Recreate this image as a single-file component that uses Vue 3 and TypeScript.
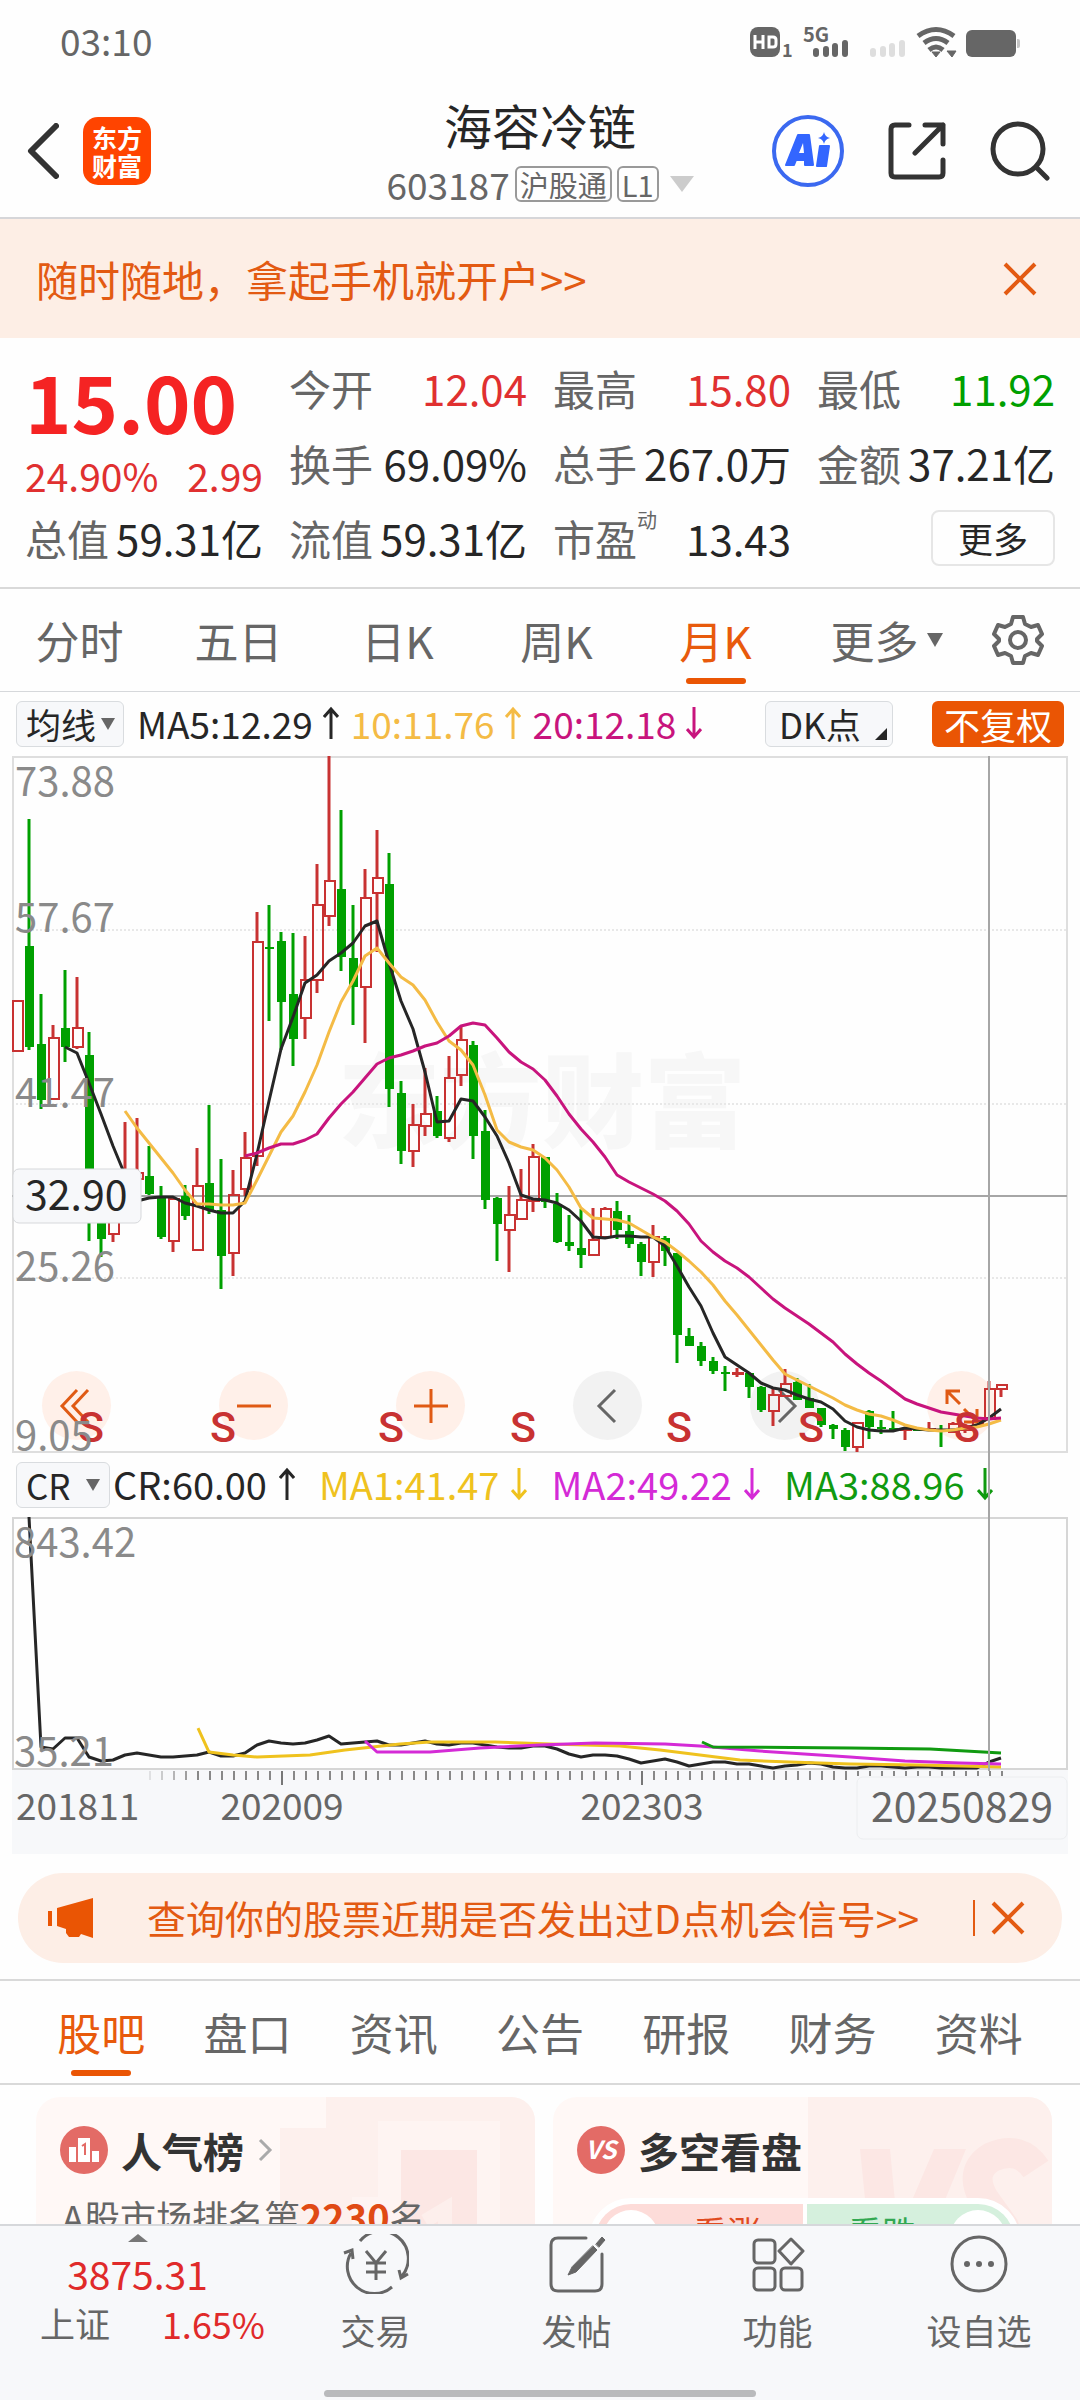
<script setup lang="ts">
import { ref } from 'vue'

type Tone = 'up' | 'down' | 'plain'
interface Quote { label: string; value: string; tone: Tone; sup?: string }
// slot index, rising or falling, then high / body top / body bottom / low
type Candle = [number, 'r' | 'g', number, number, number, number]

const rowOne: Quote[] = [
  { label: '今开', value: '12.04', tone: 'up' },
  { label: '最高', value: '15.80', tone: 'up' },
  { label: '最低', value: '11.92', tone: 'down' },
]
const rowTwo: Quote[] = [
  { label: '换手', value: '69.09%', tone: 'plain' },
  { label: '总手', value: '267.0万', tone: 'plain' },
  { label: '金额', value: '37.21亿', tone: 'plain' },
]
const rowThree: Quote[] = [
  { label: '总值', value: '59.31亿', tone: 'plain' },
  { label: '流值', value: '59.31亿', tone: 'plain' },
  { label: '市盈', value: '13.43', tone: 'plain', sup: '动' },
]

const periods = ['分时', '五日', '日K', '周K', '月K']
const period = ref('月K')
const sections = ['股吧', '盘口', '资讯', '公告', '研报', '财务', '资料']
const section = ref('股吧')
const overlay = ref('均线')
const indicator = ref('CR')
const showOpenAccount = ref(true)
const showSignal = ref(true)

const maLegend = [
  { text: 'MA5:12.29', cls: 'ink', up: true },
  { text: '10:11.76', cls: 'amber', up: true },
  { text: '20:12.18', cls: 'magenta', up: false },
]
const crLegend = [
  { text: 'CR:60.00', cls: 'ink', up: true },
  { text: 'MA1:41.47', cls: 'yellow', up: false },
  { text: 'MA2:49.22', cls: 'violet', up: false },
  { text: 'MA3:88.96', cls: 'green', up: false },
]

const candles: Candle[] = [
  [0, 'r', 1001, 1001, 1051, 1051], [1, 'g', 819, 946, 1047, 1050], [2, 'g', 994, 1044, 1100, 1109],
  [3, 'r', 1025, 1038, 1099, 1099], [4, 'g', 970, 1028, 1047, 1062], [5, 'r', 977, 1028, 1047, 1049],
  [6, 'g', 1032, 1055, 1190, 1241], [7, 'g', 1180, 1190, 1239, 1257], [8, 'r', 1180, 1200, 1234, 1242],
  [9, 'r', 1122, 1180, 1210, 1210], [10, 'r', 1118, 1173, 1179, 1179], [11, 'g', 1146, 1176, 1194, 1195],
  [12, 'g', 1186, 1196, 1237, 1239], [13, 'r', 1199, 1199, 1241, 1252], [14, 'g', 1185, 1196, 1216, 1220],
  [15, 'r', 1148, 1186, 1250, 1250], [16, 'g', 1105, 1183, 1210, 1214], [17, 'g', 1159, 1210, 1256, 1289],
  [18, 'r', 1170, 1195, 1253, 1276], [19, 'r', 1132, 1158, 1189, 1196], [20, 'r', 912, 942, 1156, 1166],
  [21, 'g', 905, 947, 949, 1021], [22, 'g', 932, 941, 1002, 1050], [23, 'g', 933, 994, 1039, 1066],
  [24, 'r', 936, 980, 1018, 1039], [25, 'r', 864, 905, 980, 993], [26, 'r', 756, 881, 916, 926],
  [27, 'g', 810, 889, 957, 971], [28, 'g', 905, 958, 987, 1025], [29, 'r', 869, 898, 987, 1043],
  [30, 'r', 830, 878, 893, 952], [31, 'g', 853, 884, 1089, 1107], [32, 'g', 1081, 1093, 1151, 1164],
  [33, 'r', 1104, 1125, 1151, 1167], [34, 'r', 1068, 1114, 1126, 1136], [35, 'g', 1096, 1111, 1136, 1138],
  [36, 'r', 1056, 1078, 1138, 1142], [37, 'r', 1026, 1040, 1075, 1086], [38, 'g', 1041, 1045, 1136, 1159],
  [39, 'g', 1110, 1131, 1200, 1209], [40, 'g', 1197, 1198, 1224, 1261], [41, 'r', 1186, 1215, 1230, 1272],
  [42, 'r', 1169, 1200, 1219, 1219], [43, 'r', 1144, 1157, 1201, 1212], [44, 'g', 1157, 1157, 1202, 1208],
  [45, 'g', 1193, 1204, 1242, 1243], [46, 'g', 1215, 1242, 1246, 1251], [47, 'g', 1209, 1248, 1255, 1268],
  [48, 'r', 1208, 1240, 1255, 1255], [49, 'r', 1207, 1209, 1237, 1237], [50, 'g', 1201, 1211, 1230, 1239],
  [51, 'g', 1215, 1231, 1244, 1248], [52, 'g', 1242, 1244, 1262, 1276], [53, 'r', 1225, 1237, 1262, 1277],
  [54, 'g', 1236, 1238, 1251, 1266], [55, 'g', 1253, 1253, 1335, 1363], [56, 'g', 1328, 1336, 1346, 1346],
  [57, 'g', 1342, 1346, 1361, 1366], [58, 'g', 1357, 1361, 1371, 1374], [59, 'g', 1366, 1372, 1374, 1391],
  [60, 'r', 1368, 1373, 1374, 1377], [61, 'g', 1373, 1373, 1387, 1398], [62, 'g', 1386, 1387, 1410, 1412],
  [63, 'r', 1388, 1395, 1411, 1426], [64, 'r', 1369, 1384, 1396, 1396], [65, 'g', 1378, 1382, 1400, 1400],
  [66, 'g', 1384, 1398, 1408, 1408], [67, 'g', 1408, 1408, 1425, 1427], [68, 'g', 1424, 1425, 1429, 1439],
  [69, 'g', 1428, 1430, 1447, 1451], [70, 'r', 1423, 1423, 1447, 1452], [71, 'g', 1410, 1411, 1427, 1439],
  [72, 'g', 1420, 1427, 1429, 1434], [73, 'g', 1411, 1428, 1430, 1430], [74, 'r', 1428, 1429, 1430, 1440],
  [75, 'g', 1428, 1429, 1431, 1431], [76, 'r', 1422, 1429, 1430, 1430], [77, 'g', 1425, 1429, 1430, 1447],
  [78, 'r', 1422, 1424, 1432, 1432], [79, 'r', 1424, 1426, 1430, 1433], [80, 'r', 1420, 1421, 1425, 1425],
  [81, 'r', 1381, 1389, 1418, 1418], [82, 'r', 1385, 1385, 1389, 1397],
]

const slot = (i: number): number => 17 + i * 12
const line = (start: number, ys: number[]): string =>
  ys.map((y, k) => `${slot(start + k)},${y}`).join(' ')

const ma5 = line(4, [1047, 1053, 1083, 1114, 1146, 1175, 1201, 1198, 1197, 1197, 1203, 1206, 1210, 1213, 1213,
  1201, 1154, 1101, 1049, 1017, 983, 975, 961, 953, 943, 926, 921, 963, 1001, 1029, 1072, 1122, 1121, 1099,
  1101, 1117, 1136, 1163, 1195, 1199, 1200, 1203, 1210, 1221, 1237, 1238, 1236, 1236, 1237, 1237, 1246, 1266,
  1287, 1306, 1333, 1357, 1365, 1373, 1383, 1388, 1390, 1395, 1399, 1402, 1409, 1421, 1427, 1430, 1431, 1431,
  1428, 1429, 1430, 1430, 1430, 1428, 1425, 1418, 1409])
const ma10 = line(9, [1111, 1128, 1143, 1158, 1173, 1190, 1204, 1204, 1205, 1205, 1203, 1180, 1156, 1132, 1116,
  1092, 1065, 1032, 1002, 981, 956, 948, 963, 977, 985, 1000, 1022, 1041, 1050, 1065, 1095, 1130, 1142, 1147,
  1150, 1158, 1170, 1187, 1208, 1218, 1219, 1220, 1223, 1230, 1237, 1242, 1251, 1261, 1272, 1285, 1301, 1315,
  1330, 1345, 1360, 1374, 1380, 1386, 1392, 1398, 1405, 1410, 1414, 1416, 1420, 1425, 1428, 1430, 1431, 1430,
  1428, 1427, 1424, 1420])
const ma20 = line(19, [1156, 1153, 1148, 1144, 1144, 1140, 1134, 1118, 1104, 1092, 1078, 1064, 1058, 1055, 1051,
  1046, 1043, 1036, 1026, 1023, 1025, 1038, 1052, 1062, 1069, 1080, 1096, 1114, 1129, 1142, 1157, 1175, 1182,
  1188, 1194, 1201, 1211, 1224, 1241, 1252, 1261, 1268, 1277, 1288, 1299, 1308, 1316, 1324, 1333, 1342, 1354,
  1364, 1373, 1381, 1390, 1399, 1404, 1408, 1412, 1414, 1416, 1418, 1419, 1418])
const cr = line(1, [1517, 1747, 1749, 1738, 1738, 1757, 1761, 1760, 1755, 1753, 1755, 1757, 1757, 1756, 1755,
  1752, 1756, 1756, 1753, 1745, 1741, 1743, 1744, 1743, 1740, 1736, 1744, 1743, 1742, 1741, 1745, 1745, 1743,
  1741, 1744, 1745, 1743, 1743, 1745, 1747, 1748, 1748, 1746, 1746, 1749, 1754, 1757, 1755, 1755, 1756, 1759,
  1763, 1761, 1759, 1762, 1766, 1764, 1762, 1762, 1764, 1764, 1766, 1768, 1766, 1765, 1763, 1764, 1767, 1768,
  1768, 1766, 1766, 1767, 1768, 1767, 1767, 1768, 1768, 1768, 1768, 1762, 1758])

const priceLabels = [
  { y: 796, text: '73.88' }, { y: 932, text: '57.67' }, { y: 1107, text: '41.47' },
  { y: 1281, text: '25.26' }, { y: 1450, text: '9.05' },
]
const sellMarks = [91, 223, 391, 523, 679, 811, 967]
const ticks = Array.from({ length: 72 }, (_, k) => k + 11)
</script>

<template>
  <div class="app">
    <div class="status">
      <span class="clock">03:10</span>
      <svg class="status-icons" viewBox="750 22 272 40" aria-hidden="true">
        <rect x="750" y="27" width="30" height="30" rx="8" fill="#666" />
        <path d="M755 35v14M763 35v14M755 42h8M769 37v10h4q3 0 3-3v-4q0-3-3-3z" fill="none" stroke="#fff" stroke-width="3" />
        <text x="782" y="57" font-size="18" font-weight="700" fill="#666">1</text>
        <text x="803" y="42" font-size="20" font-weight="700" fill="#666">5G</text>
        <g stroke="#666" stroke-width="6" stroke-linecap="round">
          <path d="M816 51v3M826 49v5M835 46v8M845 43v11" />
        </g>
        <g stroke="#dedede" stroke-width="6" stroke-linecap="round">
          <path d="M873 51v3M883 49v5M892 46v8M902 43v11" />
        </g>
        <g fill="none" stroke="#666" stroke-width="5">
          <path d="M918 36q18-13 36 0M924 43q12-9 24 0M929 50q7-6 14 0" />
        </g>
        <path d="M932 52h8l-4 5zM947 51h9l-4 6z" fill="#666" stroke="#666" />
        <rect x="966" y="30" width="50" height="27" rx="6" fill="#666" />
        <path d="M1017 39h1q2 0 2 2v5q0 2-2 2h-1z" fill="#c4c4c4" />
      </svg>
    </div>

    <header class="header">
      <div class="head-left">
        <button class="icon-btn" aria-label="返回">
          <svg width="32" height="56" viewBox="0 0 32 56"><path d="M29 3 4 28l25 25" fill="none" stroke="#333" stroke-width="6" stroke-linecap="round" stroke-linejoin="round" /></svg>
        </button>
        <a class="logo" href="#home"><span>东方</span><span>财富</span></a>
      </div>
      <div class="head-mid">
        <h1>海容冷链</h1>
        <div class="code">
          <span>603187</span><span class="tag">沪股通</span><span class="tag">L1</span>
          <svg width="24" height="16" viewBox="0 0 24 16"><path d="M0 0h24L12 16z" fill="#ccc" /></svg>
        </div>
      </div>
      <div class="head-right">
        <button class="icon-btn" aria-label="Ai">
          <svg width="72" height="72" viewBox="0 0 72 72">
            <circle cx="36" cy="36" r="34" fill="#fff" stroke="#3b69f0" stroke-width="4" />
            <path d="M14 50h8l2-5h9v5h8L37 20H26z" fill="#3366ff" stroke="#3366ff" stroke-width="2" stroke-linejoin="round" />
            <path d="m27 38 4-10 1 10z" fill="#fff" />
            <path d="M48 31h9l-3 20h-9z" fill="#3366ff" stroke="#3366ff" stroke-width="2" stroke-linejoin="round" />
            <path d="M52 17q1 5 6 6-5 1-6 6-1-5-6-6 5-1 6-6z" fill="#3366ff" />
          </svg>
        </button>
        <button class="icon-btn" aria-label="分享">
          <svg width="58" height="58" viewBox="0 0 58 58" fill="none" stroke="#333" stroke-width="5" stroke-linecap="round" stroke-linejoin="round">
            <path d="M21 3H7Q3 3 3 7v44q0 4 4 4h44q4 0 4-4V38M37 3h18v19M55 3 27 31" />
          </svg>
        </button>
        <button class="icon-btn" aria-label="搜索">
          <svg width="60" height="60" viewBox="0 0 60 60" fill="none" stroke="#333" stroke-width="5" stroke-linecap="round">
            <circle cx="28" cy="28" r="25" /><path d="m46 46 11 11" />
          </svg>
        </button>
      </div>
    </header>

    <div v-if="showOpenAccount" class="banner">
      <a href="#open">随时随地，拿起手机就开户&gt;&gt;</a>
      <button class="icon-btn" aria-label="关闭" @click="showOpenAccount = false">
        <svg width="34" height="34" viewBox="0 0 34 34"><path d="m2 2 30 30M32 2 2 32" stroke="#e35a12" stroke-width="4" /></svg>
      </button>
    </div>

    <section class="quote">
      <div class="price-block">
        <strong class="price">15.00</strong>
        <div class="change"><span>24.90%</span><span>2.99</span></div>
      </div>
      <div v-for="q in [...rowOne, ...rowTwo, ...rowThree]" :key="q.label" class="cell">
        <span class="label">{{ q.label }}<sup v-if="q.sup">{{ q.sup }}</sup></span>
        <span class="value" :class="q.tone">{{ q.value }}</span>
      </div>
      <div class="cell end"><button class="more">更多</button></div>
    </section>

    <nav class="periods">
      <button v-for="p in periods" :key="p" class="tab" :class="{ on: p === period }" @click="period = p">{{ p }}</button>
      <button class="tab tab-more">更多<svg width="16" height="14" viewBox="0 0 16 14"><path d="M0 0h16L8 14z" fill="#666" /></svg></button>
      <button class="icon-btn gear" aria-label="设置">
        <svg width="52" height="52" viewBox="0 0 52 52" fill="none" stroke="#666" stroke-width="4" stroke-linejoin="round">
          <path d="M21 3h10l2 7 6 3 7-2 4 9-5 5v2l5 5-4 9-7-2-6 3-2 7H21l-2-7-6-3-7 2-4-9 5-5v-2l-5-5 4-9 7 2 6-3z" /><circle cx="26" cy="26" r="8" />
        </svg>
      </button>
    </nav>

    <section class="charts">
      <div class="legend top">
        <label class="pick"><select v-model="overlay" aria-label="主图指标"><option>均线</option></select>
          <svg width="14" height="12" viewBox="0 0 14 12"><path d="M0 0h14L7 12z" fill="#666" /></svg></label>
        <span v-for="m in maLegend" :key="m.text" class="leg" :class="m.cls">{{ m.text }}<svg width="16" height="34" viewBox="0 0 16 34" fill="none" stroke="currentColor" stroke-width="3"><path :d="m.up ? 'M8 33V3M1 11l7-8 7 8' : 'M8 1v30M1 23l7 8 7-8'" /></svg></span>
        <button class="pick dk">DK点<svg width="12" height="12" viewBox="0 0 12 12"><path d="M12 0v12H0z" fill="#262626" /></svg></button>
        <button class="adjust">不复权</button>
      </div>

      <div class="plot">
        <div class="tools">
          <button aria-label="最左"><svg viewBox="0 0 40 40"><path d="M20 4 5 20l15 16M31 4 16 20l15 16" /></svg></button>
          <button aria-label="缩小"><svg viewBox="0 0 40 40"><path d="M3 20h34" /></svg></button>
          <button aria-label="放大"><svg viewBox="0 0 40 40"><path d="M3 20h34M20 3v34" /></svg></button>
          <button class="grey" aria-label="左移"><svg viewBox="0 0 40 40"><path d="M27 4 11 20l16 16" /></svg></button>
          <button class="grey" aria-label="右移"><svg viewBox="0 0 40 40"><path d="m14 4 16 16-16 16" /></svg></button>
          <button aria-label="全屏"><svg viewBox="0 0 40 40"><path d="M5 18V5h13M6 6l12 12M35 23v13H22M34 35 22 23" /></svg></button>
        </div>
        <svg class="canvas" viewBox="0 756 1080 697">
          <text x="542" y="1140" text-anchor="middle" font-size="102" font-weight="900" fill="#f7f7f7">东方财富</text>
          <g stroke="#e8e8e8" stroke-width="2" stroke-dasharray="2 2"><path d="M12 930h1055M12 1104h1055M12 1278h1055" /></g>
          <rect x="13" y="757" width="1054" height="695" fill="none" stroke="#dedede" stroke-width="2" />
          <path d="M12 1196h1055" stroke="#a6a6a6" stroke-width="2" />
          <g v-for="c in candles" :key="c[0]">
            <template v-if="c[1] === 'g'">
              <path :d="`M${slot(c[0])} ${c[2]}V${c[5]}`" stroke="#00a000" stroke-width="3" />
              <rect :x="slot(c[0]) - 4" :y="c[3]" width="9" :height="Math.max(c[4] - c[3], 2)" fill="#00a000" />
            </template>
            <template v-else>
              <path :d="`M${slot(c[0])} ${c[2]}V${c[3]}M${slot(c[0])} ${c[4]}V${c[5]}`" stroke="#c83232" stroke-width="3" />
              <rect :x="slot(c[0]) - 4" :y="c[3]" width="10" :height="Math.max(c[4] - c[3], 1)" fill="none" stroke="#c83232" stroke-width="2" />
            </template>
          </g>
          <g fill="none" stroke-width="3" stroke-linejoin="round">
            <polyline :points="ma5" stroke="#262626" />
            <polyline :points="ma10" stroke="#f4bb45" />
            <polyline :points="ma20" stroke="#c8147d" />
          </g>
          <text v-for="x in sellMarks" :key="x" :x="x" y="1442" text-anchor="middle" font-size="43" font-weight="500" fill="#c83232" class="mark">S</text>
          <text v-for="l in priceLabels" :key="l.text" x="15" :y="l.y" font-size="40" fill="#8a8a8a">{{ l.text }}</text>
          <rect x="13" y="1169" width="128" height="54" rx="6" fill="#f7f8fa" stroke="#d6d8db" />
          <text x="25" y="1210" font-size="41" fill="#262626">32.90</text>
        </svg>
      </div>

      <div class="legend bottom">
        <label class="pick cr"><select v-model="indicator" aria-label="副图指标"><option>CR</option></select>
          <svg width="14" height="12" viewBox="0 0 14 12"><path d="M0 0h14L7 12z" fill="#666" /></svg></label>
        <span v-for="m in crLegend" :key="m.text" class="leg" :class="m.cls">{{ m.text }}<svg width="16" height="34" viewBox="0 0 16 34" fill="none" stroke="currentColor" stroke-width="3"><path :d="m.up ? 'M8 33V3M1 11l7-8 7 8' : 'M8 1v30M1 23l7 8 7-8'" /></svg></span>
      </div>

      <svg class="canvas" viewBox="0 1517 1080 338">
        <rect x="12" y="1770" width="1056" height="84" fill="#f7f8fa" />
        <rect x="13" y="1518" width="1054" height="251" fill="none" stroke="#d6d6d6" stroke-width="2" />
        <g fill="none" stroke-width="3" stroke-linejoin="round">
          <polyline :points="cr" stroke="#262626" />
          <polyline points="198,1728 209,1752 233,1755 257,1757 310,1755 345,1750 400,1744 430,1742 495,1742 550,1744 620,1746 660,1750 700,1755 740,1760 790,1762 850,1764 920,1765 1001,1767" stroke="#efc21e" />
          <polyline points="365,1741 377,1752 430,1752 480,1748 540,1745 595,1743 665,1744 700,1746 760,1751 850,1757 905,1761 960,1763 1001,1764" stroke="#d42ad6" />
          <polyline points="702,1742 713,1747 850,1748 930,1749 1001,1753" stroke="#109a10" />
        </g>
        <path v-for="t in ticks" :key="t" :d="`M${slot(t) + 1} 1771v${slot(t) > 856 ? 5 : 9}`" stroke="#888" stroke-width="2" :stroke-opacity="Math.min(1, (t - 10) / 5)" />
        <path d="M282 1771v14M642 1771v14" stroke="#777" stroke-width="2" />
        <g font-size="40" fill="#8a8a8a"><text x="14" y="1557">843.42</text><text x="14" y="1766">35.21</text></g>
        <g font-size="37" fill="#666"><text x="16" y="1820">201811</text><text x="282" y="1820" text-anchor="middle">202009</text><text x="642" y="1820" text-anchor="middle">202303</text></g>
        <rect x="857" y="1777" width="210" height="62" rx="6" fill="#f7f8fa" stroke="#eceef0" />
        <text x="962" y="1822" font-size="41" fill="#666" text-anchor="middle">20250829</text>
      </svg>
      <i class="cursor"></i>
    </section>

    <div v-if="showSignal" class="signal">
      <svg width="46" height="40" viewBox="0 0 46 40"><path d="M0 13h4v15H0zM9 10 45 0v40l-12-4-2 3H21l-3-4v-4l-9-3z" fill="#ea5504" /></svg>
      <a href="#signal">查询你的股票近期是否发出过D点机会信号&gt;&gt;</a>
      <button class="icon-btn" aria-label="关闭提示" @click="showSignal = false">
        <svg width="34" height="34" viewBox="0 0 34 34"><path d="m2 2 30 30M32 2 2 32" stroke="#e35a12" stroke-width="4" /></svg>
      </button>
    </div>

    <nav class="sections">
      <button v-for="s in sections" :key="s" class="tab" :class="{ on: s === section }" @click="section = s">{{ s }}</button>
    </nav>

    <main class="cards">
      <article class="card">
        <svg class="deco" width="260" height="220" viewBox="0 0 260 220">
          <path d="M51 0h209v220H5V31h46z" fill="#fdf0ed" /><path d="M103 24h122v196H77V100h26z" fill="#fef4f2" /><path d="M126 53h76v167h-76z" fill="#fce7e4" />
          <path d="m150 124 20-12v108" fill="none" stroke="#fdefec" stroke-width="14" />
        </svg>
        <h2>
          <svg width="48" height="48" viewBox="0 0 48 48"><circle cx="24" cy="24" r="24" fill="#e36b66" /><path d="M9 21h7v15H9zM18 12h12v24H18zM32 25h7v11h-7z" fill="#fff" /><path d="m22 20 3-2v11" fill="none" stroke="#e36b66" stroke-width="2" /></svg>
          人气榜
          <svg width="16" height="24" viewBox="0 0 16 24"><path d="m3 2 10 10L3 22" fill="none" stroke="#aaa" stroke-width="3" /></svg>
        </h2>
        <p>A股市场排名第<b>2230</b>名</p>
      </article>
      <article class="card">
        <svg class="deco" width="260" height="220" viewBox="0 0 260 220">
          <path d="M16 0h244v220H16z" fill="#fdf0ed" />
          <path d="M68 52h30l8 84 36-84h32l-66 160H84z" fill="#fce7e4" />
          <path d="M244 72q-16-24-44-12-24 14-8 42l20 28q8 24-24 22" fill="none" stroke="#fce7e4" stroke-width="30" />
        </svg>
        <h2>
          <svg width="48" height="48" viewBox="0 0 48 48"><circle cx="24" cy="24" r="24" fill="#e36b66" /><text x="24" y="33" text-anchor="middle" font-size="25" font-weight="700" font-style="italic" fill="#fff">VS</text></svg>
          多空看盘
        </h2>
        <div class="vote">
          <button class="bull"><i></i><span>看涨</span></button>
          <button class="bear"><span>看跌</span><i></i></button>
        </div>
      </article>
    </main>

    <footer class="dock">
      <div class="dock-row">
        <a class="index" href="#index">
          <svg width="20" height="8" viewBox="0 0 20 8"><path d="M0 8h20L10 0z" fill="#777" /></svg>
          <span class="points">3875.31</span>
          <span class="index-line"><em>上证</em><span>1.65%</span></span>
        </a>
        <button class="act">
          <svg width="66" height="60" viewBox="0 0 66 60" fill="none" stroke="#666" stroke-width="3">
            <path d="M17 7a27 27 0 0 1 42 35M49 53A27 27 0 0 1 8 19M1 19l8-3 1 9M65 40l-7 4-2-8" />
            <path d="m23 17 10 12 10-12M23 29h20M23 38h20M33 29v17" />
          </svg>
          交易
        </button>
        <button class="act">
          <svg width="58" height="60" viewBox="0 0 58 60" fill="none" stroke="#666" stroke-width="3" stroke-linecap="round">
            <path d="M38 4H10q-7 0-7 7v39q0 7 7 7h37q7 0 7-7V20" /><path d="m48 10 6-7 3 3-6 7zM45 12l4 4-21 22-8 3 4-8z" fill="#666" stroke-width="1" />
          </svg>
          发帖
        </button>
        <button class="act">
          <svg width="54" height="60" viewBox="0 0 54 60" fill="none" stroke="#666" stroke-width="3" stroke-linejoin="round">
            <rect x="3" y="6" width="21" height="23" rx="4" /><rect x="3" y="34" width="21" height="22" rx="4" /><rect x="30" y="34" width="21" height="22" rx="4" /><path d="M40 5 52 17 40 30 28 17z" />
          </svg>
          功能
        </button>
        <button class="act">
          <svg width="58" height="60" viewBox="0 0 58 60" fill="none" stroke="#666" stroke-width="3">
            <circle cx="29" cy="30" r="27" /><g fill="#666" stroke="none"><circle cx="17" cy="30" r="3" /><circle cx="29" cy="30" r="3" /><circle cx="41" cy="30" r="3" /></g>
          </svg>
          设自选
        </button>
      </div>
      <i class="home-bar"></i>
    </footer>
  </div>
</template>

<style>
body { background: #fff; }
</style>

<style scoped>
.app, .app * { box-sizing: border-box; }
.app {
  height: 100vh; display: flex; flex-direction: column; overflow: hidden;
  font-family: "Noto Sans CJK SC", "Noto Sans", sans-serif; color: #262626; background: #fefefe;
}
.app > * { flex: none; }
button, select { font: inherit; color: inherit; border: 0; background: none; padding: 0; margin: 0; }
a { color: inherit; text-decoration: none; }
svg { display: block; flex: none; }
.icon-btn { display: flex; align-items: center; justify-content: center; }

.status { height: 84px; padding: 0 58px 0 60px; display: flex; align-items: center; justify-content: space-between; }
.clock { font-size: 37px; line-height: 40px; padding-bottom: 4px; color: #666; }
.status-icons { width: 272px; height: 40px; }

.header { height: 135px; border-bottom: 2px solid #d6d6d9; display: grid; grid-template-columns: 1fr auto 1fr; align-items: center; }
.head-left { display: flex; align-items: center; gap: 24px; padding-left: 27px; }
.logo {
  width: 68px; height: 68px; border-radius: 15px; background: #ff4400; color: #fff;
  font-size: 25px; font-weight: 700; line-height: 28px; display: flex; flex-direction: column; align-items: center; justify-content: center;
}
.head-mid { display: flex; flex-direction: column; align-items: center; gap: 10px; padding-bottom: 3px; }
.head-mid h1 { margin: 0; font-size: 48px; font-weight: 400; line-height: 60px; }
.code { display: flex; align-items: center; gap: 5px; font-size: 37px; line-height: 40px; color: #666; }
.tag { border: 2px solid #999; border-radius: 6px; font-size: 29px; line-height: 32px; padding: 0 3px; }
.code svg { margin-left: 6px; }
.head-right { display: flex; align-items: center; justify-content: flex-end; gap: 44px; padding-right: 30px; }

.banner { height: 119px; background: #fdeee5; padding: 0 43px 0 36px; display: flex; align-items: center; justify-content: space-between; color: #e35a12; font-size: 42px; line-height: 60px; }

.quote {
  height: 251px; padding: 12px 25px; border-bottom: 2px solid #d9d9d9;
  display: grid; grid-template-columns: repeat(4, 1fr); grid-template-rows: repeat(3, 75px); column-gap: 26px;
}
.price-block { grid-row: 1 / 3; display: flex; flex-direction: column; padding-top: 3px; color: #e03030; }
.price { font-size: 79px; line-height: 94px; color: #f52323; }
.change { display: flex; justify-content: space-between; font-size: 39px; line-height: 56px; }
.cell { display: flex; align-items: center; justify-content: space-between; font-size: 42px; line-height: 60px; white-space: nowrap; }
.cell.end { justify-content: flex-end; }
.price-block + .cell + .cell + .cell + .cell { grid-column: 2; }
.label { color: #666; display: flex; }
.label sup { font-size: 20px; line-height: 24px; }
.up { color: #e03030; }
.down { color: #00a000; }
.more { width: 124px; height: 56px; border: 2px solid #e6e6e6; border-radius: 8px; font-size: 35px; line-height: 48px; }

.tab { position: relative; font-size: 44px; line-height: 60px; color: #666; display: flex; align-items: center; justify-content: center; }
.tab.on { color: #e85a0c; }
.tab.on::after { content: ""; position: absolute; left: calc(50% - 30px); bottom: 7px; width: 60px; height: 6px; border-radius: 3px; background: #ea5504; }
.periods { height: 103px; border-bottom: 1px solid #d6d8db; padding-right: 22px; display: grid; grid-template-columns: repeat(5, 159fr) 183fr 80fr; }
.tab-more { gap: 8px; }

.charts { position: relative; }
.legend { display: flex; align-items: center; padding: 0 16px; white-space: nowrap; }
.legend.top { height: 64px; font-size: 37px; line-height: 44px; }
.legend.bottom { height: 64px; font-size: 38px; line-height: 44px; }
.pick { height: 46px; border: 1px solid #d9dcdf; border-radius: 6px; background: #f7f8fa; display: flex; align-items: center; padding: 0 9px; font-size: 35px; line-height: 44px; color: #262626; }
.pick select { appearance: none; height: 44px; line-height: 44px; }
.legend.top .pick:first-child { width: 108px; gap: 4px; margin-right: 13px; }
.pick.cr { width: 94px; justify-content: space-between; margin-right: 3px; }
.leg { display: flex; align-items: center; gap: 10px; margin-right: 12px; padding-bottom: 2px; }
.legend.bottom .leg { gap: 12px; margin-right: 24px; }
.ink { color: #262626; }
.amber { color: #f4bb45; }
.magenta { color: #c8147d; }
.yellow { color: #efc21e; }
.violet { color: #d42ad6; }
.green { color: #109a10; }
.dk { width: 128px; margin-left: auto; justify-content: space-between; padding: 0 5px 0 13px; font-size: 35px; }
.dk svg { align-self: flex-end; margin-bottom: 6px; }
.adjust { width: 132px; height: 46px; margin-left: 39px; border-radius: 6px; background: #ea5504; color: #fff; font-size: 36px; line-height: 44px; }

.plot { position: relative; }
.canvas { position: relative; width: 100%; height: auto; pointer-events: none; }
.mark { font-family: Roboto, "Noto Sans CJK SC", sans-serif; }
.tools { position: absolute; left: 42px; right: 84px; bottom: 13px; display: flex; justify-content: space-between; }
.tools button { width: 69px; height: 69px; border-radius: 50%; background: #fff0e9; display: flex; align-items: center; justify-content: center; color: #e05a14; }
.tools .grey { background: #f2f2f2; color: #666; }
.tools svg { width: 40px; height: 40px; fill: none; stroke: currentColor; stroke-width: 3; }
.cursor { position: absolute; left: calc(100% * 988 / 1080); top: 64px; bottom: 84px; width: 2px; background: #a6a6a6; }

.signal { height: 90px; margin: 18px 18px 16px; border-radius: 45px; background: #fdeee6; padding: 0 37px 0 30px; display: flex; align-items: center; color: #e35a12; font-size: 39px; line-height: 56px; }
.signal a { margin-left: 53px; padding-bottom: 3px; flex: 1; white-space: nowrap; }
.signal .icon-btn { border-left: 2px solid #e35a12; height: 36px; padding-left: 16px; }

.sections { height: 106px; border-top: 2px solid #d9d9d9; border-bottom: 2px solid #d9d9d9; padding: 0 28px; display: grid; grid-template-columns: repeat(7, 1fr); }

.app > .cards { flex: 1 1 0; min-height: 0; overflow: hidden; padding: 12px 28px 0 36px; display: grid; grid-template-columns: 1fr 1fr; gap: 18px; }
.card { position: relative; height: 260px; border-radius: 24px; overflow: hidden; background: #fff8f6; padding: 23px 24px; }
.deco { position: absolute; right: 0; top: 0; }
.card h2 { position: relative; margin: 0; display: flex; align-items: center; gap: 13px; font-size: 41px; font-weight: 700; line-height: 60px; color: #333; }
.card p { position: relative; margin: 10px 0 0 2px; font-size: 36px; line-height: 52px; color: #666; }
.card b { color: #e04a14; font-size: 38px; }
.vote { position: relative; margin: 18px 8px 0 12px; height: 84px; border: 6px solid #fff; border-radius: 42px; overflow: hidden; display: flex; gap: 4px; background: #fff; }
.vote button { flex: 1; height: 72px; display: flex; align-items: flex-start; gap: 34px; font-size: 34px; line-height: 44px; padding: 6px 8px; }
.vote i { width: 56px; height: 56px; border-radius: 50%; background: #fff; }
.bull { background: #fddcd9; color: #e04a20; }
.bear { background: #d5f0dd; color: #32a852; justify-content: flex-end; }

.dock { height: 176px; background: #f7f8fa; border-top: 2px solid #d6d8db; display: flex; flex-direction: column; justify-content: space-between; align-items: center; padding-bottom: 3px; }
.dock-row { width: 100%; display: grid; grid-template-columns: 275fr 201fr 201fr 201fr 202fr; }
.index { display: flex; flex-direction: column; align-items: center; padding-top: 8px; color: #e02a2a; font-size: 39px; line-height: 50px; }
.points { margin-top: 6px; }
.index-line { align-self: stretch; display: flex; justify-content: space-between; padding: 0 10px 0 40px; font-size: 36px; }
.index-line em { font-style: normal; color: #666; font-size: 35px; }
.act { display: flex; flex-direction: column; align-items: center; gap: 10px; padding-top: 8px; font-size: 35px; line-height: 52px; color: #666; }
.home-bar { width: 40%; height: 7px; border-radius: 4px; background: #b9babc; }
</style>
